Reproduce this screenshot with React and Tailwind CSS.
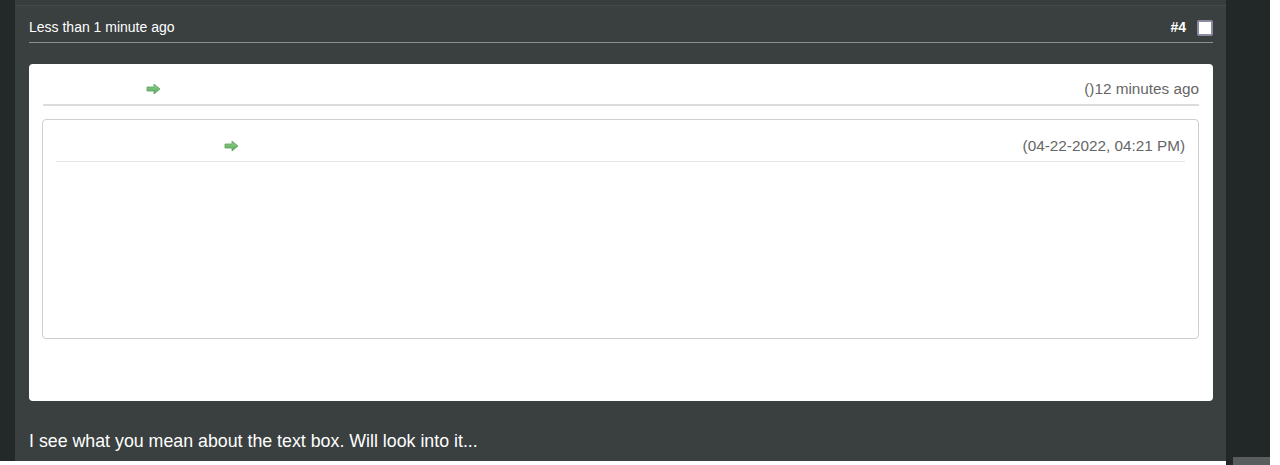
const Arrow = () => (
    <svg width="15" height="12" viewBox="0 0 15 12">
        <defs>
            <linearGradient id="ag" x1="0" y1="0" x2="0" y2="1">
                <stop offset="0" stopColor="#8fd08f" />
                <stop offset="1" stopColor="#5aa85a" />
            </linearGradient>
        </defs>
        <path d="M1 4h7V1l6 5-6 5V8H1z" fill="url(#ag)" stroke="#5aa35a" strokeWidth="0.8" strokeLinejoin="round" />
    </svg>
);

export default function App() {
    return (
        <div className="h-[465px] w-[1280px] overflow-hidden bg-white flex" style={{ fontFamily: '"Liberation Sans", Arial, sans-serif' }}>
            <div className="w-[15px] h-[461px] bg-[#232828]" />
            <div className="w-[1211px] h-[461px] bg-[#3a3f40] flex flex-col">
                <div className="h-[6px] border-b border-[#454a4b] bg-[#383d3e]" />
                {/* post header */}
                <div className="ml-[14px] w-[1184px] h-[37px] flex items-end justify-between pb-[5px] border-b border-[#8a8f90]">
                    <span className="text-[14px] text-white leading-[20px]">Less than 1 minute ago</span>
                    <div className="flex items-center gap-[11px] mb-[-1px]">
                        <span className="text-[14px] font-bold text-white">#4</span>
                        <span className="w-[16px] h-[16px] rounded-[2px] bg-white border-2 border-[#8a8aa0]" />
                    </div>
                </div>
                {/* quote card */}
                <div className="ml-[14px] w-[1184px] mt-[21px] h-[337px] bg-white rounded-[4px] px-[14px] pt-[12px]">
                    <div className="h-[30px] flex items-center justify-between border-b-2 border-[#dcdcdc] pb-[2px]">
                        <span className="ml-[103px]"><Arrow /></span>
                        <span className="text-[15.3px] text-[#666]">()12 minutes ago</span>
                    </div>
                    <div className="mt-[13px] ml-[-1px] h-[220px] border border-[#cfcfcf] rounded-[4px] px-[13px] pt-[13px]">
                        <div className="h-[29px] flex items-center justify-between border-b border-[#e4e4e4] pb-[2px]">
                            <span className="ml-[168px]"><Arrow /></span>
                            <span className="text-[15.3px] text-[#666]">(04-22-2022, 04:21 PM)</span>
                        </div>
                    </div>
                </div>
                <p className="ml-[14px] mt-[27px] text-[17.8px] text-white">I see what you mean about the text box. Will look into it...</p>
            </div>
            <div className="w-[44px] h-[465px] bg-[#222727] flex flex-col justify-end">
                <div className="ml-[7px] h-[8px] bg-[#5a5d5e]" />
            </div>
            <div className="flex-1 bg-white" />
        </div>
    );
}
